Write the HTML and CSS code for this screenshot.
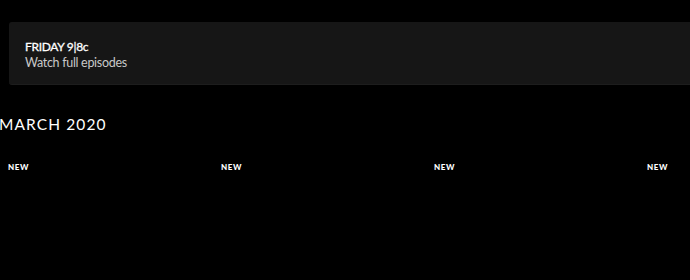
FILE: index.html
```html
<!DOCTYPE html>
<html lang="en">
<head>
  <meta charset="UTF-8" />
  <title>Schedule</title>
  <link rel="stylesheet" href="styles.css">
</head>
<body>
  <div class="page">
    <div class="banner">
      <div class="banner-title">FRIDAY 9|8c</div>
      <div class="banner-sub">Watch full episodes</div>
    </div>
    <h2 class="month">MARCH 2020</h2>
    <div class="episodes">
      <div class="episode"><span class="badge">NEW</span></div>
      <div class="episode"><span class="badge">NEW</span></div>
      <div class="episode"><span class="badge">NEW</span></div>
      <div class="episode"><span class="badge">NEW</span></div>
    </div>
  </div>
</body>
</html>
```

FILE: styles.css
```css
html, body { margin: 0; background: #000; }
body { font-family: "Lato", "Open Sans", sans-serif; color: #fff; }
.page { width: 690px; height: 280px; overflow: hidden; }
.banner { margin: 22px 0 0 9px; width: 720px; height: 63px; box-sizing: border-box; padding: 18px 16px; background: #161616; border-radius: 3px; border-bottom: 1px solid #1d1d1d; }
.banner-title { font-size: 12px; font-weight: 400; letter-spacing: -0.3px; line-height: 14px; color: #fff; -webkit-text-stroke: 0.3px #fff; }
.banner-sub { font-size: 12.5px; letter-spacing: -0.3px; line-height: 16px; color: #c8c8c8; margin-top: 1px; }
.month { margin: 29px 0 0 -1px; font-size: 15.5px; font-weight: 400; letter-spacing: 1.1px; line-height: 20px; }
.episodes { display: grid; grid-template-columns: repeat(4, 213px); padding-left: 8px; margin-top: 20px; }
.badge { font-size: 8px; font-weight: 900; letter-spacing: 0.6px; line-height: 10px; }
```
